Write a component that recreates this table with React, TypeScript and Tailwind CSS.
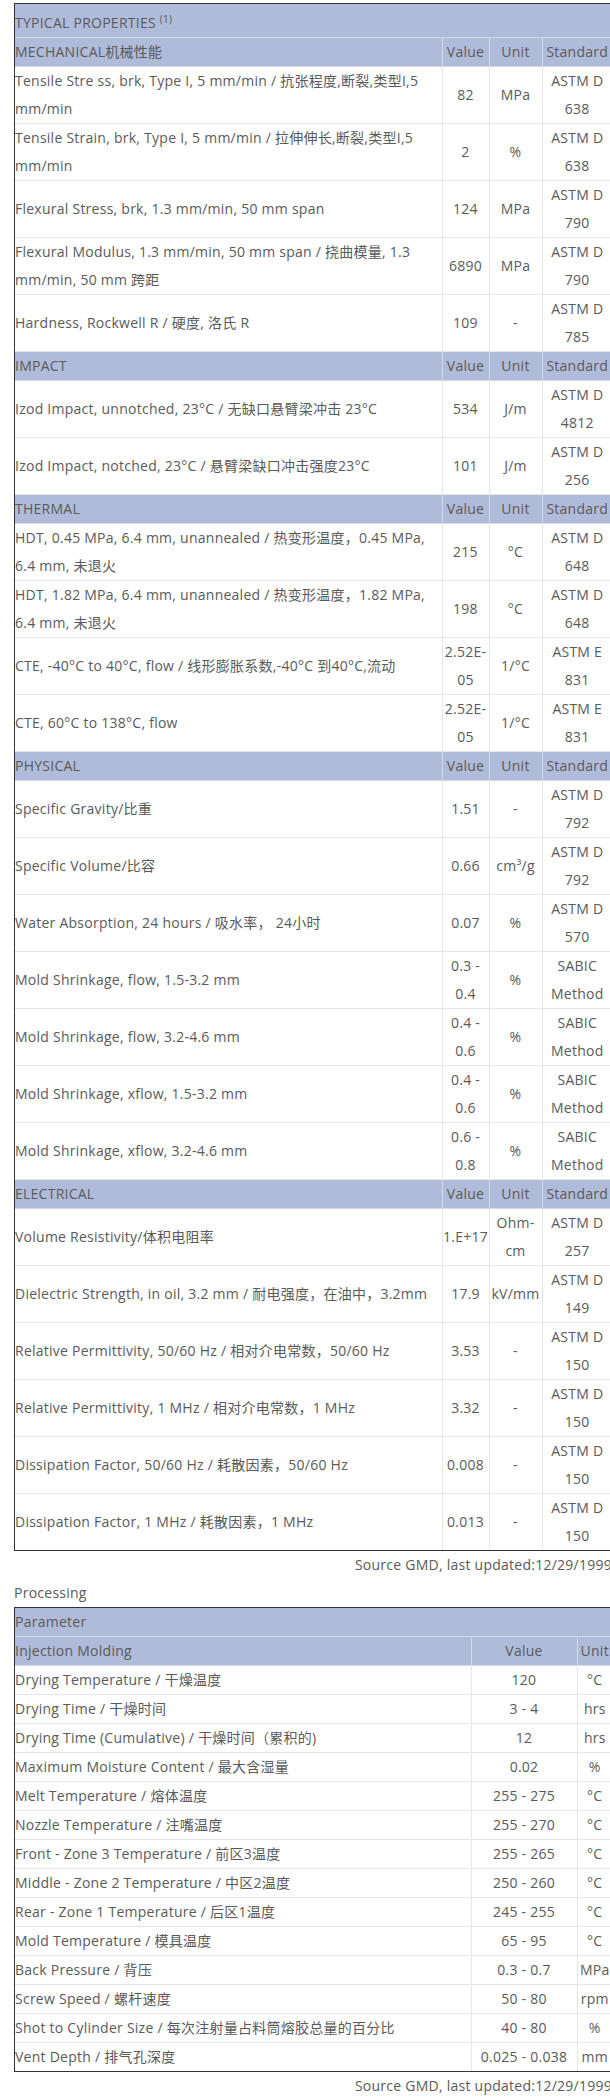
type Row = { name: string; value: string; unit: string; standard: string };
type Section = { title: string; rows: Row[] };

const sections: Section[] = [
  {
    title: 'MECHANICAL机械性能',
    rows: [
      { name: 'Tensile Stre ss, brk, Type I, 5 mm/min / 抗张程度,断裂,类型I,5 mm/min', value: '82', unit: 'MPa', standard: 'ASTM D 638' },
      { name: 'Tensile Strain, brk, Type I, 5 mm/min / 拉伸伸长,断裂,类型I,5 mm/min', value: '2', unit: '%', standard: 'ASTM D 638' },
      { name: 'Flexural Stress, brk, 1.3 mm/min, 50 mm span', value: '124', unit: 'MPa', standard: 'ASTM D 790' },
      { name: 'Flexural Modulus, 1.3 mm/min, 50 mm span / 挠曲模量, 1.3 mm/min, 50 mm 跨距', value: '6890', unit: 'MPa', standard: 'ASTM D 790' },
      { name: 'Hardness, Rockwell R / 硬度, 洛氏 R', value: '109', unit: '-', standard: 'ASTM D 785' },
    ],
  },
  {
    title: 'IMPACT',
    rows: [
      { name: 'Izod Impact, unnotched, 23°C / 无缺口悬臂梁冲击 23°C', value: '534', unit: 'J/m', standard: 'ASTM D 4812' },
      { name: 'Izod Impact, notched, 23°C / 悬臂梁缺口冲击强度23°C', value: '101', unit: 'J/m', standard: 'ASTM D 256' },
    ],
  },
  {
    title: 'THERMAL',
    rows: [
      { name: 'HDT, 0.45 MPa, 6.4 mm, unannealed / 热变形温度，0.45 MPa, 6.4 mm, 未退火', value: '215', unit: '°C', standard: 'ASTM D 648' },
      { name: 'HDT, 1.82 MPa, 6.4 mm, unannealed / 热变形温度，1.82 MPa, 6.4 mm, 未退火', value: '198', unit: '°C', standard: 'ASTM D 648' },
      { name: 'CTE, -40°C to 40°C, flow / 线形膨胀系数,-40°C 到40°C,流动', value: '2.52E-05', unit: '1/°C', standard: 'ASTM E 831' },
      { name: 'CTE, 60°C to 138°C, flow', value: '2.52E-05', unit: '1/°C', standard: 'ASTM E 831' },
    ],
  },
  {
    title: 'PHYSICAL',
    rows: [
      { name: 'Specific Gravity/比重', value: '1.51', unit: '-', standard: 'ASTM D 792' },
      { name: 'Specific Volume/比容', value: '0.66', unit: 'cm³/g', standard: 'ASTM D 792' },
      { name: 'Water Absorption, 24 hours / 吸水率， 24小时', value: '0.07', unit: '%', standard: 'ASTM D 570' },
      { name: 'Mold Shrinkage, flow, 1.5-3.2 mm', value: '0.3 - 0.4', unit: '%', standard: 'SABIC Method' },
      { name: 'Mold Shrinkage, flow, 3.2-4.6 mm', value: '0.4 - 0.6', unit: '%', standard: 'SABIC Method' },
      { name: 'Mold Shrinkage, xflow, 1.5-3.2 mm', value: '0.4 - 0.6', unit: '%', standard: 'SABIC Method' },
      { name: 'Mold Shrinkage, xflow, 3.2-4.6 mm', value: '0.6 - 0.8', unit: '%', standard: 'SABIC Method' },
    ],
  },
  {
    title: 'ELECTRICAL',
    rows: [
      { name: 'Volume Resistivity/体积电阻率', value: '1.E+17', unit: 'Ohm-cm', standard: 'ASTM D 257' },
      { name: 'Dielectric Strength, in oil, 3.2 mm / 耐电强度，在油中，3.2mm', value: '17.9', unit: 'kV/mm', standard: 'ASTM D 149' },
      { name: 'Relative Permittivity, 50/60 Hz / 相对介电常数，50/60 Hz', value: '3.53', unit: '-', standard: 'ASTM D 150' },
      { name: 'Relative Permittivity, 1 MHz / 相对介电常数，1 MHz', value: '3.32', unit: '-', standard: 'ASTM D 150' },
      { name: 'Dissipation Factor, 50/60 Hz / 耗散因素，50/60 Hz', value: '0.008', unit: '-', standard: 'ASTM D 150' },
      { name: 'Dissipation Factor, 1 MHz / 耗散因素，1 MHz', value: '0.013', unit: '-', standard: 'ASTM D 150' },
    ],
  },
];

const processing = [
  ['Drying Temperature / 干燥温度', '120', '°C'],
  ['Drying Time / 干燥时间', '3 - 4', 'hrs'],
  ['Drying Time (Cumulative) / 干燥时间（累积的)', '12', 'hrs'],
  ['Maximum Moisture Content / 最大含湿量', '0.02', '%'],
  ['Melt Temperature / 熔体温度', '255 - 275', '°C'],
  ['Nozzle Temperature / 注嘴温度', '255 - 270', '°C'],
  ['Front - Zone 3 Temperature / 前区3温度', '255 - 265', '°C'],
  ['Middle - Zone 2 Temperature / 中区2温度', '250 - 260', '°C'],
  ['Rear - Zone 1 Temperature / 后区1温度', '245 - 255', '°C'],
  ['Mold Temperature / 模具温度', '65 - 95', '°C'],
  ['Back Pressure / 背压', '0.3 - 0.7', 'MPa'],
  ['Screw Speed / 螺杆速度', '50 - 80', 'rpm'],
  ['Shot to Cylinder Size / 每次注射量占料筒熔胶总量的百分比', '40 - 80', '%'],
  ['Vent Depth / 排气孔深度', '0.025 - 0.038', 'mm'],
];

const head = 'bg-[#b0bad9] border border-[#d3d8ea] p-0 font-normal';
const cell = 'border border-[#e6e6e6] p-0';

const App = () => {
  return (
    <div className="w-[610px] overflow-hidden bg-white">
      <div
        className="w-[612px] pl-[14px] pt-[3px] text-[14px] leading-[28px] tracking-[0.25px] text-[#5a5a5a]"
        style={{ fontFamily: "'Open Sans', 'Noto Sans CJK SC', sans-serif" }}
      >
        <div className="border-y border-l border-[#333]">
          <table className="w-full table-fixed border-collapse border-hidden">
            <colgroup>
              <col className="w-[427px]" />
              <col className="w-[47px]" />
              <col className="w-[53px]" />
              <col />
            </colgroup>
            <tbody>
              <tr className="h-[33px]">
                <td colSpan={4} className={`${head} text-left align-bottom`}>
                  TYPICAL PROPERTIES <sup className="text-[10px]">(1)</sup>
                </td>
              </tr>
              {sections.map((s) => (
                <>
                  <tr key={s.title}>
                    <td className={`${head} text-left`}>{s.title}</td>
                    <td className={`${head} text-center`}>Value</td>
                    <td className={`${head} text-center`}>Unit</td>
                    <td className={`${head} text-center`}>Standard</td>
                  </tr>
                  {s.rows.map((r) => (
                    <tr key={s.title + r.name} className="h-[57px]">
                      <td className={`${cell} text-left`}>{r.name}</td>
                      <td className={`${cell} text-center`}>{r.value}</td>
                      <td className={`${cell} text-center`}>{r.unit}</td>
                      <td className={`${cell} text-center`}>{r.standard}</td>
                    </tr>
                  ))}
                </>
              ))}
            </tbody>
          </table>
        </div>
        <div className="text-right whitespace-nowrap">Source GMD, last updated:12/29/1999</div>
        <div>Processing</div>
        <div className="border-y border-l border-[#333]">
          <table className="w-full table-fixed border-collapse border-hidden">
            <colgroup>
              <col className="w-[456px]" />
              <col className="w-[106px]" />
              <col />
            </colgroup>
            <tbody>
              <tr>
                <td colSpan={3} className={`${head} text-left`}>Parameter</td>
              </tr>
              <tr>
                <td className={`${head} text-left`}>Injection Molding</td>
                <td className={`${head} text-center`}>Value</td>
                <td className={`${head} text-center`}>Unit</td>
              </tr>
              {processing.map(([name, value, unit]) => (
                <tr key={name}>
                  <td className={`${cell} text-left`}>{name}</td>
                  <td className={`${cell} text-center whitespace-nowrap`}>{value}</td>
                  <td className={`${cell} text-center whitespace-nowrap`}>{unit}</td>
                </tr>
              ))}
            </tbody>
          </table>
        </div>
        <div className="text-right whitespace-nowrap">Source GMD, last updated:12/29/1999</div>
      </div>
    </div>
  );
};

export default App;
